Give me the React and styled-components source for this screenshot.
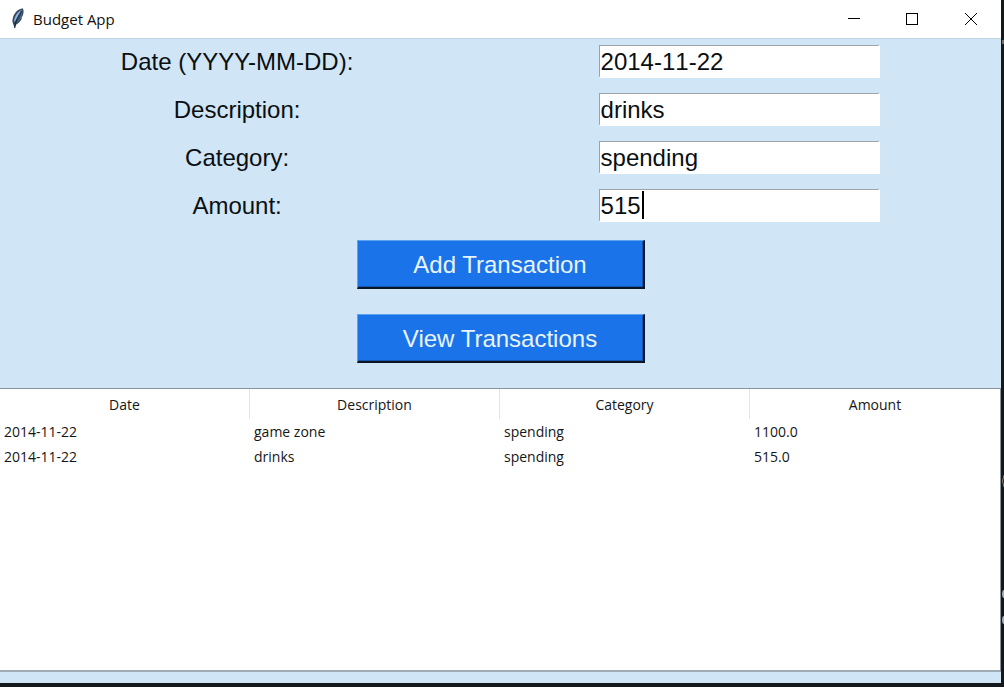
import React, { useState } from "react";
import styled, { createGlobalStyle } from "styled-components";

const GlobalStyle = createGlobalStyle`
  *, *::before, *::after { box-sizing: border-box; }
  body { margin: 0; background: #14181b; }
`;

const Desktop = styled.div`
  display: grid;
  grid-template-columns: 1fr 3px;
  min-height: 100vh;
  padding-bottom: 4px;
  background: #14181b;
`;

const DesktopEdge = styled.svg`
  display: block;
  width: 3px;
  height: 100%;
`;

const Window = styled.main`
  display: flex;
  flex-direction: column;
  min-width: 0;
  background: #d0e5f5;
`;

const TitleBar = styled.header`
  display: flex;
  align-items: center;
  height: 39px;
  padding-left: 10px;
  background: #fff;
  border-bottom: 1px solid #c3d5df;
`;

const Feather = styled.svg`
  width: 16px;
  height: 22px;
  margin-right: 7px;
`;

const Title = styled.h1`
  flex: 1;
  margin: 0;
  font: 400 15px/20px "Open Sans", "Noto Sans", sans-serif;
  color: #111;
`;

const WindowButton = styled.button`
  display: grid;
  place-items: center;
  width: 58px;
  height: 38px;
  padding: 0;
  border: 0;
  background: transparent;
  &:last-child { width: 60px; }
`;

const Form = styled.form`
  padding: 6px 0 25px;
  font: 24px/28px "Liberation Sans", Arial, sans-serif;
`;

const Fields = styled.div`
  display: grid;
  gap: 15px;
`;

const FieldRow = styled.div`
  display: grid;
  grid-template-columns: 9fr 10fr;
  align-items: center;
  justify-items: center;
`;

const Label = styled.label`
  color: #0b0f12;
`;

const Entry = styled.div`
  position: relative;
  width: 281px;
  margin-left: 3px;
`;

const Input = styled.input`
  display: block;
  width: 100%;
  height: 33px;
  padding: 1px 1px 0;
  border: 2px solid #fff;
  border-top: 1px solid #9da3a8;
  border-left: 1px solid #9da3a8;
  border-radius: 0;
  outline: 0;
  background: #fff;
  color: #0b0f12;
  font: inherit;
  font-kerning: none;
`;

const Caret = styled.span`
  position: absolute;
  top: 2px;
  width: 2px;
  height: 28px;
  margin-left: 3px;
  background: #000;
`;

const Actions = styled.div`
  display: grid;
  justify-items: center;
  gap: 25px;
  padding-top: 18px;
`;

const ActionButton = styled.button`
  width: 288px;
  height: 49px;
  padding: 2px 0 0;
  border: 2px solid;
  border-color: #5ba2f3 #0a1526 #0a1526 #5ba2f3;
  border-width: 1px 2px 2px 1px;
  border-radius: 0;
  box-shadow: inset -1px -1px #1755ae;
  background: #1a73e8;
  color: #e9f3fd;
  font: inherit;
`;

const TableFrame = styled.section`
  flex: 1;
  margin-bottom: 11px;
  border: 1px solid #87949f;
  border-left: 0;
  border-bottom: 2px solid #9fabb5;
  background: #fff;
`;

const Table = styled.table`
  width: 100%;
  table-layout: fixed;
  border-collapse: separate;
  border-spacing: 0;
  font: 14px/25px "Open Sans", "Noto Sans", sans-serif;
  color: #161616;
`;

const HeadCell = styled.th`
  height: 30px;
  padding: 0;
  border-right: 1px solid #e3e5e7;
  font-weight: 400;
  text-align: center;
  &:last-child { border-right: 0; }
`;

const Cell = styled.td`
  height: 25px;
  padding: 0 4px;
`;

const fields = [
  { id: "date", label: "Date (YYYY-MM-DD):", value: "2014-11-22" },
  { id: "description", label: "Description:", value: "drinks" },
  { id: "category", label: "Category:", value: "spending" },
  { id: "amount", label: "Amount:", value: "515", active: true },
];

const columns = ["Date", "Description", "Category", "Amount"];

const transactions = [
  ["2014-11-22", "game zone", "spending", "1100.0"],
  ["2014-11-22", "drinks", "spending", "515.0"],
];

function Field({ id, label, value, active }) {
  const [text, setText] = useState(value);
  return (
    <FieldRow>
      <Label htmlFor={id}>{label}</Label>
      <Entry>
        <Input id={id} value={text} onChange={(e) => setText(e.target.value)} />
        {active && <Caret style={{ left: `${text.length}ch` }} />}
      </Entry>
    </FieldRow>
  );
}

export default function App() {
  return (
    <>
      <GlobalStyle />
      <Desktop>
        <Window>
          <TitleBar>
            <Feather viewBox="0 0 16 22" aria-hidden="true">
              <path d="M12.600 0.300C8.500 1 4.800 4.300 3.100 9C2.200 12 2.200 14.600 3.300 16.200L4.700 20.500L6 16.700C8.700 15.600 10.900 13 11.900 10.300L11.400 10L12.900 7.200C13.800 4.500 14 2 12.600 0.300Z" fill="#34485f" />
              <path d="M11.900 1.600C8.300 3.400 5.600 6.800 4.300 11L4.200 14.500C6.800 10.500 9.700 7 11.900 1.600Z" fill="#8db4de" />
              <path d="M12.500 3C11 8.500 8 12.300 5.800 15.700C9.200 13.700 12.600 8.500 12.500 3Z" fill="#4a6d9a" />
              <path d="M11.400 3C8.600 7.500 5.800 12 4.700 20" fill="none" stroke="#131d2b" strokeWidth="0.900" />
            </Feather>
            <Title>Budget App</Title>
            <WindowButton type="button" aria-label="Minimize">
              <svg width="12" height="12" shapeRendering="crispEdges"><path d="M0 5.500H12" stroke="#000" /></svg>
            </WindowButton>
            <WindowButton type="button" aria-label="Maximize">
              <svg width="12" height="12" shapeRendering="crispEdges"><rect x="0.500" y="0.500" width="11" height="11" fill="none" stroke="#000" /></svg>
            </WindowButton>
            <WindowButton type="button" aria-label="Close">
              <svg width="12" height="12"><path d="M0 0L12 12M12 0L0 12" stroke="#000" /></svg>
            </WindowButton>
          </TitleBar>
          <Form onSubmit={(e) => e.preventDefault()}>
            <Fields>
              {fields.map((field) => <Field key={field.id} {...field} />)}
            </Fields>
            <Actions>
              <ActionButton type="submit">Add Transaction</ActionButton>
              <ActionButton type="button">View Transactions</ActionButton>
            </Actions>
          </Form>
          <TableFrame>
            <Table>
              <thead>
                <tr>{columns.map((name) => <HeadCell key={name} scope="col">{name}</HeadCell>)}</tr>
              </thead>
              <tbody>
                {transactions.map((row, index) => (
                  <tr key={index}>
                    {row.map((value, i) => <Cell key={columns[i]}>{value}</Cell>)}
                  </tr>
                ))}
              </tbody>
            </Table>
          </TableFrame>
        </Window>
        <DesktopEdge aria-hidden="true">
          <path d="M1 42H3" stroke="#7b6a60" strokeWidth="4" />
          <path d="M3 475Q0 481 3 487" fill="none" stroke="#8c8074" />
          <ellipse cx="3" cy="594" rx="2" ry="4" fill="#a3abb2" />
          <ellipse cx="3" cy="620" rx="2" ry="4" fill="#a3abb2" />
        </DesktopEdge>
      </Desktop>
    </>
  );
}
